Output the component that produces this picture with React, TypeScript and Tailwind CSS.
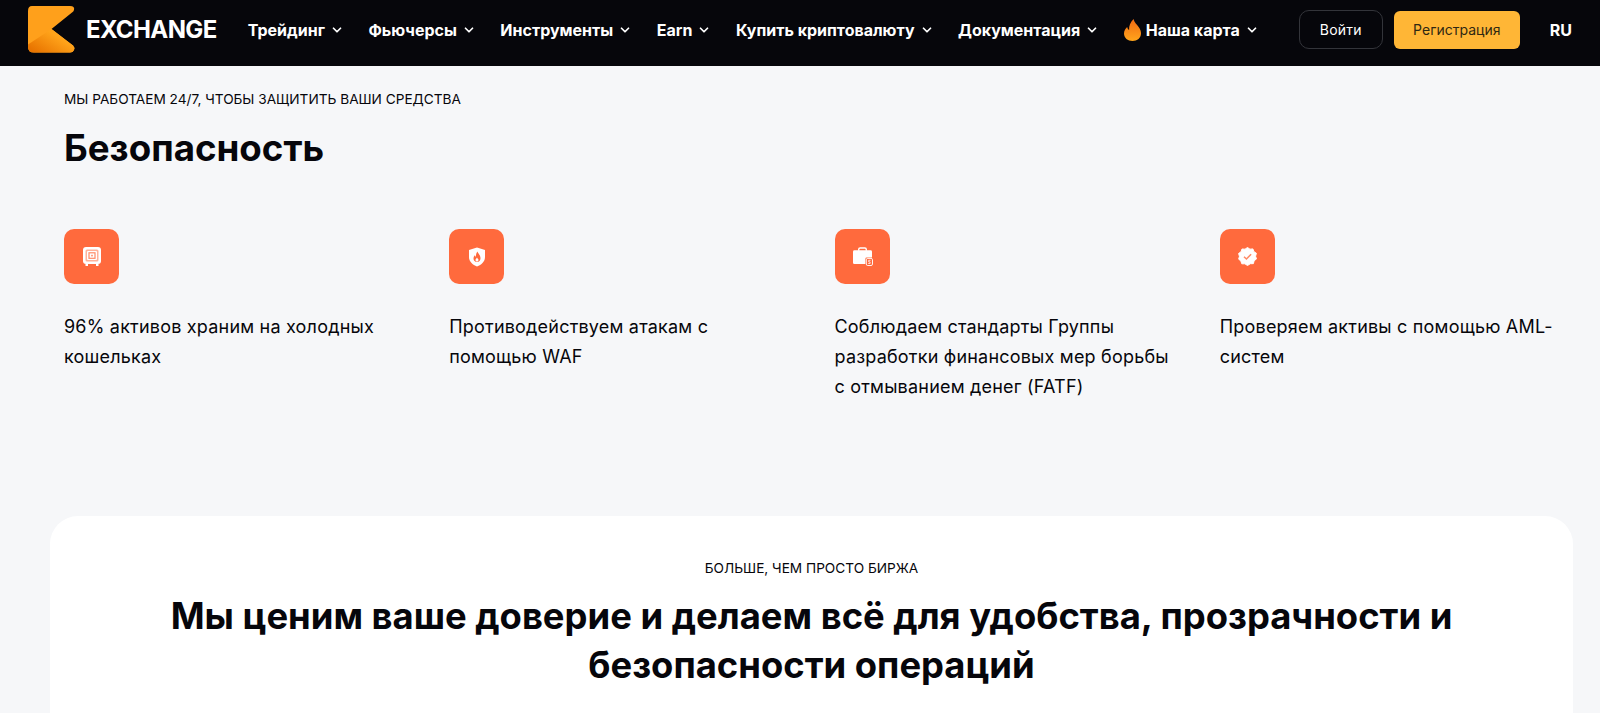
import { ChevronDown } from "lucide-react";

const nav = ["Трейдинг", "Фьючерсы", "Инструменты", "Earn", "Купить криптовалюту", "Документация"];

function Logo() {
  return (
    <svg width="47" height="47" viewBox="0 0 47 47" className="shrink-0">
      <defs>
        <linearGradient id="lg" x1="0.1" y1="0.9" x2="0.7" y2="0.4">
          <stop offset="0" stopColor="#e87400" />
          <stop offset="1" stopColor="#ffa31a" />
        </linearGradient>
      </defs>
      <path d="M4 0H42Q47 0 46 4Q45.500 5.500 44 6.500L23.500 23L45 39.500Q47 41.500 46 44Q45 46.500 42 46.500H6Q0 46.500 0 41V5Q0 0 4 0Z" fill="#ffa01b" />
      <path d="M0 38.500L23.500 23L45 39.500Q47 41.500 46 44Q45 46.500 42 46.500H6Q0 46.500 0 41Z" fill="url(#lg)" />
    </svg>
  );
}

function Flame() {
  return (
    <svg width="17" height="22" viewBox="0 0 16 22" preserveAspectRatio="none" className="shrink-0">
      <defs>
        <linearGradient id="fl" x1="0" y1="0" x2="0" y2="1">
          <stop offset="0" stopColor="#f26a12" />
          <stop offset="1" stopColor="#ffa51c" />
        </linearGradient>
      </defs>
      <path d="M9 0C9.500 3.500 12 5 13.800 8C15.500 10.500 16 12.500 16 14.500C16 19 12.500 22 8 22C3.500 22 0 19 0 14.500C0 11.500 1.500 9.500 3 8C3.300 9.500 3.900 10.500 4.800 11C4.500 7 6 3 9 0Z" fill="url(#fl)" />
    </svg>
  );
}

function SafeIcon() {
  return (
    <svg width="20" height="21" viewBox="0 0 20 21" fill="none">
      <rect x="1" y="1" width="18" height="17" rx="3" fill="#fff" />
      <rect x="3.500" y="3.500" width="13" height="12" rx="1.500" fill="#ffb29a" />
      <rect x="5" y="5" width="10" height="9" rx="1" fill="#fff" />
      <rect x="7" y="6.800" width="6" height="5.500" fill="none" stroke="#ff8a66" strokeWidth="1.200" />
      <rect x="9.200" y="8.800" width="1.600" height="1.600" fill="#ff8a66" />
      <rect x="3.500" y="18" width="2.500" height="2" fill="#fff" />
      <rect x="14" y="18" width="2.500" height="2" fill="#fff" />
    </svg>
  );
}

function ShieldIcon() {
  return (
    <svg width="20" height="20" viewBox="0 0 20 20">
      <path d="M10 0.500L18 3V10C18 14.500 14.500 17.800 10 19.500C5.500 17.800 2 14.500 2 10V3Z" fill="#fff" />
      <path d="M10.500 4.500C10.800 6.500 13.500 8 13.500 11.200C13.500 13.500 12 15 10 15C8 15 6.500 13.500 6.500 11.500C6.500 10 7.200 9 8 8.300C8.200 9.200 8.500 9.600 9 9.900C8.800 8 9.300 6 10.500 4.500Z" fill="#ff6a3d" />
      <path d="M10 10.500C10.300 11.500 11.500 11.800 11.500 13C11.500 13.900 10.800 14.500 10 14.500C9.200 14.500 8.500 13.900 8.500 13C8.500 12 9.500 11.500 10 10.500Z" fill="#fff" />
    </svg>
  );
}

function CaseIcon() {
  return (
    <svg width="21" height="19" viewBox="0 0 22 20" fill="none">
      <path d="M7 4V2.500Q7 1 8.500 1H13.500Q15 1 15 2.500V4" stroke="#fff" strokeWidth="1.500" />
      <path d="M2.500 3.500H19.500Q21 3.500 21 5V11H15.500Q14 11 14 12.500V18H2.500Q1 18 1 16.500V5Q1 3.500 2.500 3.500Z" fill="#fff" />
      <rect x="15" y="12" width="6.500" height="7.500" rx="1.500" fill="#ff6a3d" stroke="#fff" strokeWidth="1" />
      <path d="M19.500 14H17.500V15.700H19V17.400H17" stroke="#fff" strokeWidth="0.800" />
    </svg>
  );
}

function BadgeIcon() {
  return (
    <svg width="19" height="19" viewBox="0 0 20 20" fill="none">
      <path d="M10 0.500L12.600 2.300L15.700 2L16.800 4.900L19.400 6.600L18.500 9.700L19.500 12.500L17 14.500L16.200 17.500L13 17.600L10 19.500L7.200 17.700L4 17.700L3 14.700L0.700 12.800L1.500 9.800L0.600 6.800L3.200 5L4.200 2.100L7.400 2.300Z" fill="#fff" stroke="#fff" strokeWidth="1" strokeLinejoin="round" />
      <path d="M6.300 10.200L8.900 12.600L13.800 7.600" stroke="#ff8a66" strokeWidth="1.600" />
    </svg>
  );
}

const features = [
  { icon: <SafeIcon />, text: "96% активов храним на холодных кошельках" },
  { icon: <ShieldIcon />, text: "Противодействуем атакам с помощью WAF" },
  { icon: <CaseIcon />, text: "Соблюдаем стандарты Группы разработки финансовых мер борьбы с отмыванием денег (FATF)" },
  { icon: <BadgeIcon />, text: "Проверяем активы с помощью AML-систем" },
];

export default function App() {
  return (
    <div className="flex h-[713px] flex-col overflow-hidden bg-[#f6f7f9] font-['Inter',sans-serif] text-[#06060b]">
      <header className="flex h-[66px] shrink-0 items-center bg-[#06060b] pb-[7px] pl-[28px] pr-[28px] text-white">
        <Logo />
        <span className="ml-[11px] text-[24px] font-bold tracking-[-0.6px]">EXCHANGE</span>
        <nav className="ml-[31px] flex items-center gap-[24.500px] text-[16px] font-bold">
          {nav.map((n) => (
            <span key={n} className="flex items-center gap-[5px]">
              {n}
              <ChevronDown size={14} strokeWidth={3} />
            </span>
          ))}
          <span className="flex items-center gap-[5px]">
            <Flame />
            Наша карта
            <ChevronDown size={14} strokeWidth={3} />
          </span>
        </nav>
        <button className="ml-auto h-[39px] w-[84px] rounded-[10px] border border-[#33343a] text-[14px] tracking-[0.2px]">Войти</button>
        <button className="ml-[11px] h-[38px] w-[126px] rounded-[6px] bg-[#ffb636] text-[14px] text-[#2f2812]">Регистрация</button>
        <span className="ml-[30px] text-[16px] font-bold">RU</span>
      </header>

      <section className="pl-[64px] pr-[40px] pt-[24px]">
        <p className="text-[13.650px] leading-[18px] uppercase">Мы работаем 24/7, чтобы защитить ваши средства</p>
        <h2 className="mt-[18px] text-[36.700px] leading-[44px] font-bold">Безопасность</h2>
        <div className="mt-[59px] grid grid-cols-4 gap-[45px]">
          {features.map((f, i) => (
            <div key={i}>
              <div className="flex size-[55px] items-center justify-center rounded-[10px] bg-[#ff6a3d]">{f.icon}</div>
              <p className="mt-[28px] text-[18px] leading-[30px] tracking-[0.2px]">{f.text}</p>
            </div>
          ))}
        </div>
      </section>

      <section className="ml-[50px] mr-[27px] mt-[114px] grow rounded-t-[28px] bg-white pt-[43px] text-center">
        <p className="text-[13.650px] leading-[18px] uppercase">Больше, чем просто биржа</p>
        <h2 className="mx-auto mt-[15px] max-w-[1300px] text-[36.400px] leading-[49px] font-bold">
          Мы ценим ваше доверие и делаем всё для удобства, прозрачности и безопасности операций
        </h2>
      </section>
    </div>
  );
}
